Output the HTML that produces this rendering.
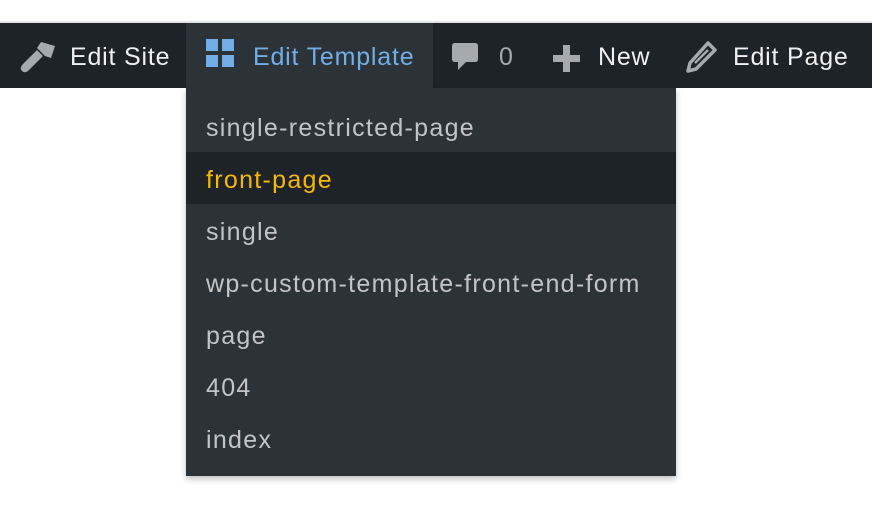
<!DOCTYPE html>
<html><head><style>
body{margin:0;width:872px;height:520px;background:#fff;overflow:hidden;font-family:"Liberation Sans",sans-serif;position:relative}
.top{position:absolute;left:0;top:21px;width:872px;height:2px;background:#e4e4e4}
.bar{position:absolute;left:0;top:23px;width:872px;height:65px;background:#1d2327}
.it{position:absolute;top:2px;height:65px;line-height:65px;font-size:25px;letter-spacing:0.8px;color:#f0f0f1;white-space:nowrap}
.sel{position:absolute;left:186px;top:0;width:247px;height:65px;background:#2c3338}
.dd{position:absolute;left:186px;top:88px;width:490px;height:388px;background:#2c3338;box-shadow:0 3px 6px rgba(0,0,0,.25)}
.dd div{height:52px;line-height:56px;padding-left:20px;font-size:25px;letter-spacing:1.3px;color:#c3c4c7;white-space:nowrap}
.dd div.h{background:#1d2327;color:#f6b900}
svg{position:absolute}
</style></head><body>
<div class="top"></div>
<div class="bar">
<div class="sel"></div>
<svg style="left:19px;top:17px" width="38" height="34" viewBox="0 0 38 34"><path d="M22 2 L36 6 L32 18 L26 16 L18 8 Z" fill="#a7aaad"/><path d="M18 10 L24 16 L10 30 Q6 34 3 31 Q0 28 4 24 Z" fill="#a7aaad"/></svg>
<div class="it" style="left:70px">Edit Site</div>
<svg style="left:206px;top:16px" width="28" height="28"><rect x="0" y="0" width="12" height="12" fill="#72aee6"/><rect x="16" y="0" width="12" height="12" fill="#72aee6"/><rect x="0" y="16" width="12" height="12" fill="#72aee6"/><rect x="16" y="16" width="12" height="12" fill="#72aee6"/></svg>
<div class="it" style="left:253px;color:#72aee6">Edit Template</div>
<svg style="left:452px;top:20px" width="28" height="32"><path d="M3 0 H23 Q26 0 26 3 V16 Q26 19 23 19 H14 L6 27 V19 H3 Q0 19 0 16 V3 Q0 0 3 0 Z" fill="#a7aaad"/></svg>
<div class="it" style="left:499px;color:#a7aaad">0</div>
<svg style="left:553px;top:22px" width="27" height="27"><rect x="10" y="0" width="7" height="27" fill="#a7aaad"/><rect x="0" y="10" width="27" height="7" fill="#a7aaad"/></svg>
<div class="it" style="left:598px">New</div>
<svg style="left:686px;top:18px" width="32" height="32"><path d="M22 2 L29 9 L10 28 L2 30 L4 22 Z" fill="none" stroke="#a7aaad" stroke-width="3.5" stroke-linejoin="round"/><path d="M9 22 L22 9" stroke="#a7aaad" stroke-width="2.5"/></svg>
<div class="it" style="left:733px">Edit Page</div>
</div>
<div class="dd" style="padding-top:12px;box-sizing:border-box">
<div>single-restricted-page</div>
<div class="h">front-page</div>
<div>single</div>
<div>wp-custom-template-front-end-form</div>
<div>page</div>
<div>404</div>
<div>index</div>
</div>
</body></html>
